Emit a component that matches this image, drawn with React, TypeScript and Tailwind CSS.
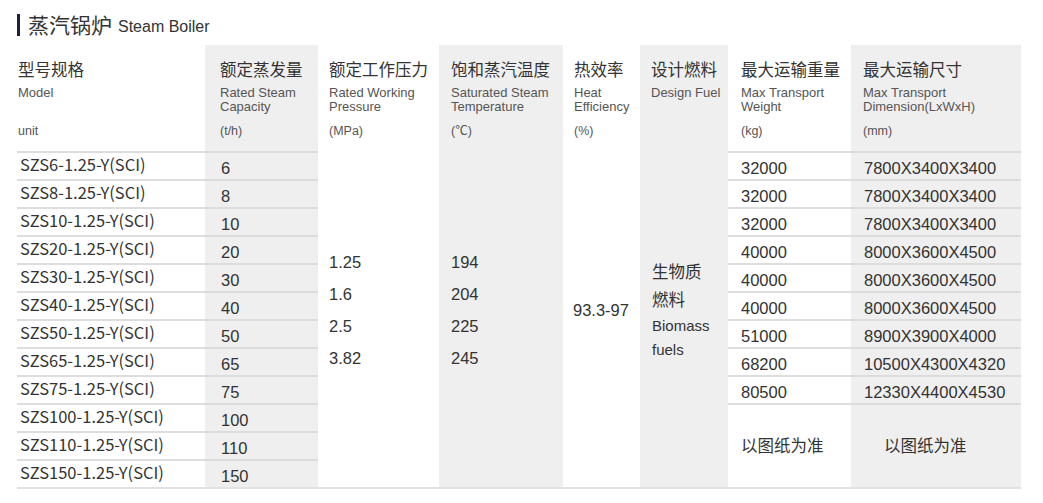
const models = [
    { model: "SZS6-1.25-Y(SCI)", capacity: "6" },
    { model: "SZS8-1.25-Y(SCI)", capacity: "8" },
    { model: "SZS10-1.25-Y(SCI)", capacity: "10" },
    { model: "SZS20-1.25-Y(SCI)", capacity: "20" },
    { model: "SZS30-1.25-Y(SCI)", capacity: "30" },
    { model: "SZS40-1.25-Y(SCI)", capacity: "40" },
    { model: "SZS50-1.25-Y(SCI)", capacity: "50" },
    { model: "SZS65-1.25-Y(SCI)", capacity: "65" },
    { model: "SZS75-1.25-Y(SCI)", capacity: "75" },
    { model: "SZS100-1.25-Y(SCI)", capacity: "100" },
    { model: "SZS110-1.25-Y(SCI)", capacity: "110" },
    { model: "SZS150-1.25-Y(SCI)", capacity: "150" },
];

const transport = [
    { weight: "32000", size: "7800X3400X3400" },
    { weight: "32000", size: "7800X3400X3400" },
    { weight: "32000", size: "7800X3400X3400" },
    { weight: "40000", size: "8000X3600X4500" },
    { weight: "40000", size: "8000X3600X4500" },
    { weight: "40000", size: "8000X3600X4500" },
    { weight: "51000", size: "8900X3900X4000" },
    { weight: "68200", size: "10500X4300X4320" },
    { weight: "80500", size: "12330X4400X4530" },
];

interface HeaderProps {
    zh: string;
    en: string[];
    unit?: string;
    className?: string;
}

function HeaderCell({ zh, en, unit, className }: HeaderProps) {
    return (
        <div className={`h-[106px] pt-[13px] ${className ?? ""}`}>
            <p className="text-[16.5px] leading-[24px] text-[#333] whitespace-nowrap">{zh}</p>
            <div className="mt-[4px] h-[28px] text-[13px] leading-[14px] text-[#555]">
                {en.map((line) => (
                    <p key={line} className="whitespace-nowrap">{line}</p>
                ))}
            </div>
            {unit && <p className="mt-[10px] text-[12.5px] leading-[14px] text-[#555]">{unit}</p>}
        </div>
    );
}

export default function App() {
    return (
        <div className="bg-white w-[1043px] h-[503px] pl-[17px] pt-[14px] font-['Liberation_Sans','Noto_Sans_CJK_SC',sans-serif] text-[#333]">
            <div className="flex items-center h-[22px]">
                <span className="w-[3px] h-[22px] bg-[#1a2142]" />
                <span className="ml-[8px] text-[21px] leading-[22px] text-[#333] translate-y-[1px]">蒸汽锅炉</span>
                <span className="ml-[6px] text-[16px] leading-[22px] text-[#333] translate-y-[2px]">Steam Boiler</span>
            </div>

            <div className="mt-[9px] flex w-[1004px] border-b-2 border-[#e2e2e2]">
                {/* model */}
                <div className="w-[188px] flex flex-col">
                    <HeaderCell className="pl-[1px]" zh="型号规格" en={["Model"]} unit="unit" />
                    {models.map((m) => (
                        <div
                            key={m.model}
                            className="h-[28px] border-t-2 border-[#dddddd] pl-[3px] font-['Noto_Sans_CJK_SC',sans-serif] text-[16.5px] leading-[22px]"
                        >
                            {m.model}
                        </div>
                    ))}
                </div>

                {/* capacity */}
                <div className="w-[113px] flex flex-col bg-[#efefef]">
                    <HeaderCell className="pl-[15px]" zh="额定蒸发量" en={["Rated Steam", "Capacity"]} unit="(t/h)" />
                    {models.map((m) => (
                        <div key={m.model} className="h-[28px] border-t-2 border-[#dcdcdc] pl-[16px] pt-[4px] text-[16.5px] leading-[22px]">
                            {m.capacity}
                        </div>
                    ))}
                </div>

                {/* pressure */}
                <div className="w-[121px] flex flex-col">
                    <HeaderCell className="pl-[11px]" zh="额定工作压力" en={["Rated Working", "Pressure"]} unit="(MPa)" />
                    <div className="h-[336px] pl-[11px] pt-[95px] text-[16.5px] leading-[32px]">
                        <p>1.25</p>
                        <p>1.6</p>
                        <p>2.5</p>
                        <p>3.82</p>
                    </div>
                </div>

                {/* temperature */}
                <div className="w-[124px] flex flex-col bg-[#efefef]">
                    <HeaderCell className="pl-[12px]" zh="饱和蒸汽温度" en={["Saturated Steam", "Temperature"]} unit="(℃)" />
                    <div className="h-[336px] pl-[12px] pt-[95px] text-[16.5px] leading-[32px]">
                        <p>194</p>
                        <p>204</p>
                        <p>225</p>
                        <p>245</p>
                    </div>
                </div>

                {/* efficiency */}
                <div className="w-[77px] flex flex-col">
                    <HeaderCell className="pl-[11px]" zh="热效率" en={["Heat", "Efficiency"]} unit="(%)" />
                    <div className="h-[336px] pl-[10px] pt-[147px] text-[16.5px] leading-[24px]">93.3-97</div>
                </div>

                {/* fuel */}
                <div className="w-[88px] flex flex-col bg-[#efefef]">
                    <HeaderCell className="pl-[11px]" zh="设计燃料" en={["Design Fuel"]} />
                    <div className="h-[336px] pl-[12px] pt-[107px]">
                        <p className="text-[16.5px] leading-[28px]">生物质</p>
                        <p className="text-[16.5px] leading-[28px]">燃料</p>
                        <p className="text-[15px] leading-[24px]">Biomass</p>
                        <p className="text-[15px] leading-[24px]">fuels</p>
                    </div>
                </div>

                {/* weight */}
                <div className="w-[123px] flex flex-col">
                    <HeaderCell className="pl-[13px]" zh="最大运输重量" en={["Max Transport", "Weight"]} unit="(kg)" />
                    {transport.map((t, i) => (
                        <div key={i} className="h-[28px] border-t-2 border-[#dddddd] pl-[13px] pt-[4px] text-[16.5px] leading-[22px]">
                            {t.weight}
                        </div>
                    ))}
                    <div className="h-[84px] border-t-2 border-[#dddddd] pl-[13px] flex items-center text-[16.5px]">以图纸为准</div>
                </div>

                {/* dimension */}
                <div className="w-[170px] flex flex-col bg-[#efefef]">
                    <HeaderCell className="pl-[12px]" zh="最大运输尺寸" en={["Max Transport", "Dimension(LxWxH)"]} unit="(mm)" />
                    {transport.map((t, i) => (
                        <div key={i} className="h-[28px] border-t-2 border-[#dcdcdc] pl-[13px] pt-[4px] text-[16.5px] leading-[22px] whitespace-nowrap">
                            {t.size}
                        </div>
                    ))}
                    <div className="h-[84px] border-t-2 border-[#dcdcdc] pl-[33px] flex items-center text-[16.5px]">以图纸为准</div>
                </div>
            </div>
        </div>
    );
}
